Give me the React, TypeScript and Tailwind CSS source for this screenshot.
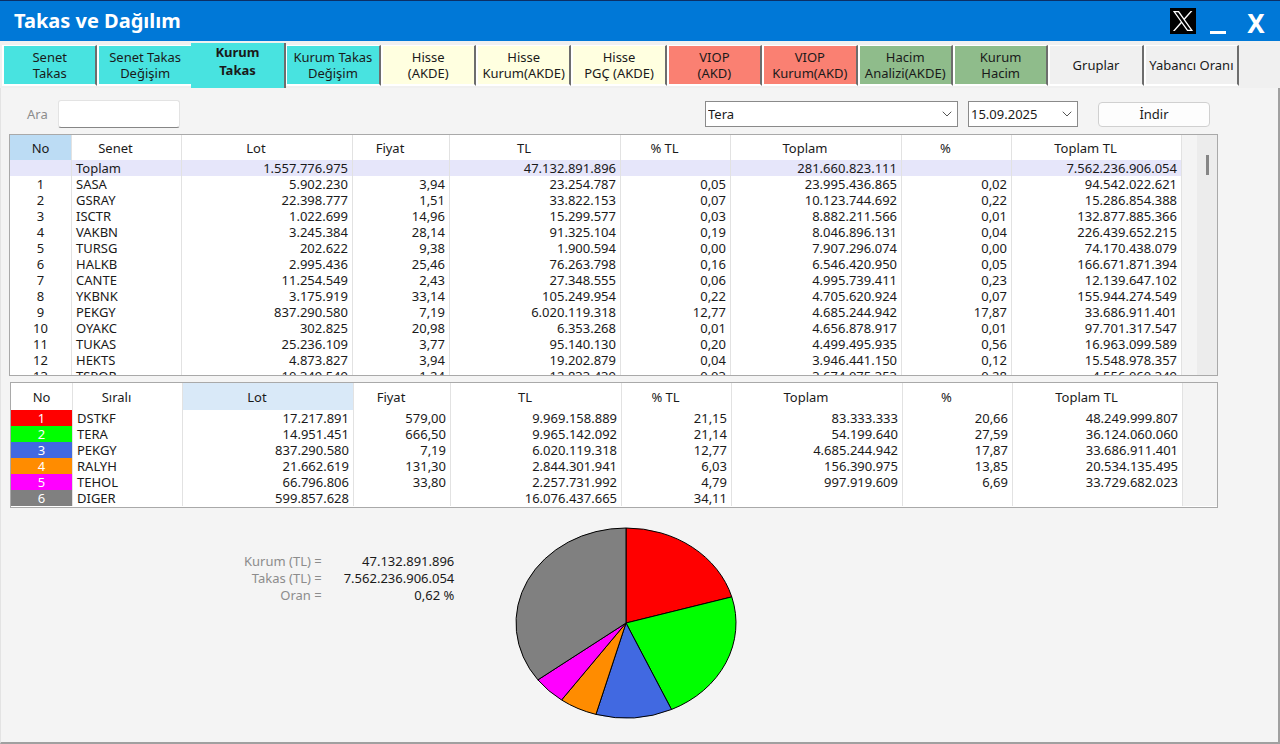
import { ChevronDown } from "lucide-react";
import clsx from "clsx";

const tabs = [
  { lines: ["Senet", "Takas"], color: "bg-[#48e3e0]" },
  { lines: ["Senet Takas", "Değişim"], color: "bg-[#48e3e0]" },
  { lines: ["Kurum", "Takas"], color: "bg-[#48e3e0]", active: true },
  { lines: ["Kurum Takas", "Değişim"], color: "bg-[#48e3e0]" },
  { lines: ["Hisse", "(AKDE)"], color: "bg-[#ffffe0]" },
  { lines: ["Hisse", "Kurum(AKDE)"], color: "bg-[#ffffe0]" },
  { lines: ["Hisse", "PGÇ (AKDE)"], color: "bg-[#ffffe0]" },
  { lines: ["VIOP", "(AKD)"], color: "bg-[#fa8072]" },
  { lines: ["VIOP", "Kurum(AKD)"], color: "bg-[#fa8072]" },
  { lines: ["Hacim", "Analizi(AKDE)"], color: "bg-[#8fbc8b]" },
  { lines: ["Kurum", "Hacim"], color: "bg-[#8fbc8b]" },
  { lines: ["Gruplar"], color: "bg-[#f0f0f0]" },
  { lines: ["Yabancı Oranı"], color: "bg-[#f0f0f0]" },
];

const stocks = [
  ["", "Toplam", "1.557.776.975", "", "47.132.891.896", "", "281.660.823.111", "", "7.562.236.906.054"],
  ["1", "SASA", "5.902.230", "3,94", "23.254.787", "0,05", "23.995.436.865", "0,02", "94.542.022.621"],
  ["2", "GSRAY", "22.398.777", "1,51", "33.822.153", "0,07", "10.123.744.692", "0,22", "15.286.854.388"],
  ["3", "ISCTR", "1.022.699", "14,96", "15.299.577", "0,03", "8.882.211.566", "0,01", "132.877.885.366"],
  ["4", "VAKBN", "3.245.384", "28,14", "91.325.104", "0,19", "8.046.896.131", "0,04", "226.439.652.215"],
  ["5", "TURSG", "202.622", "9,38", "1.900.594", "0,00", "7.907.296.074", "0,00", "74.170.438.079"],
  ["6", "HALKB", "2.995.436", "25,46", "76.263.798", "0,16", "6.546.420.950", "0,05", "166.671.871.394"],
  ["7", "CANTE", "11.254.549", "2,43", "27.348.555", "0,06", "4.995.739.411", "0,23", "12.139.647.102"],
  ["8", "YKBNK", "3.175.919", "33,14", "105.249.954", "0,22", "4.705.620.924", "0,07", "155.944.274.549"],
  ["9", "PEKGY", "837.290.580", "7,19", "6.020.119.318", "12,77", "4.685.244.942", "17,87", "33.686.911.401"],
  ["10", "OYAKC", "302.825", "20,98", "6.353.268", "0,01", "4.656.878.917", "0,01", "97.701.317.547"],
  ["11", "TUKAS", "25.236.109", "3,77", "95.140.130", "0,20", "4.499.495.935", "0,56", "16.963.099.589"],
  ["12", "HEKTS", "4.873.827", "3,94", "19.202.879", "0,04", "3.946.441.150", "0,12", "15.548.978.357"],
  ["13", "TSPOR", "10.349.549", "1,24", "12.833.439", "0,03", "3.674.075.353", "0,28", "4.556.060.349"],
];

const ranked = [
  ["1", "DSTKF", "17.217.891", "579,00", "9.969.158.889", "21,15", "83.333.333", "20,66", "48.249.999.807"],
  ["2", "TERA", "14.951.451", "666,50", "9.965.142.092", "21,14", "54.199.640", "27,59", "36.124.060.060"],
  ["3", "PEKGY", "837.290.580", "7,19", "6.020.119.318", "12,77", "4.685.244.942", "17,87", "33.686.911.401"],
  ["4", "RALYH", "21.662.619", "131,30", "2.844.301.941", "6,03", "156.390.975", "13,85", "20.534.135.495"],
  ["5", "TEHOL", "66.796.806", "33,80", "2.257.731.992", "4,79", "997.919.609", "6,69", "33.729.682.023"],
  ["6", "DIGER", "599.857.628", "", "16.076.437.665", "34,11", "", "", ""],
];

const slices = [
  { value: 21.15, fill: "#ff0000" },
  { value: 21.14, fill: "#00ff00" },
  { value: 12.77, fill: "#4169e1" },
  { value: 6.03, fill: "#ff8c00" },
  { value: 4.79, fill: "#ff00ff" },
  { value: 34.12, fill: "#808080" },
];

const rankColors = [
  "bg-[#ff0000]",
  "bg-[#00ff00]",
  "bg-[#4169e1]",
  "bg-[#ff8c00]",
  "bg-[#ff00ff]",
  "bg-[#808080]",
];

const columnWidths = [
  "w-[62px]",
  "w-[110px]",
  "w-[171px]",
  "w-[97px]",
  "w-[171px]",
  "w-[110px]",
  "w-[171px]",
  "w-[110px]",
  "w-[170px]",
];

type GridProps = {
  nameTitle: string;
  rows: string[][];
  selected: number;
  selectedColor: string;
  colors?: string[];
};

function Grid({ nameTitle, rows, selected, selectedColor, colors }: GridProps) {
  const titles = ["No", nameTitle, "Lot", "Fiyat", "TL", "% TL", "Toplam", "%", "Toplam TL"];

  return (
    <table className="w-full table-fixed border-separate border-spacing-0 self-start">
      <colgroup>
        {columnWidths.map((width, i) => (
          <col key={i} className={width} />
        ))}
        <col />
      </colgroup>
      <thead>
        <tr className={colors ? "h-[27px]" : "h-[25px]"}>
          {titles.map((title, i) => (
            <th
              key={title}
              className={clsx(
                "border-r border-[#e2e2e2] p-0 text-center font-normal",
                i > 0 && "pr-[22px]",
                i === selected ? selectedColor : "bg-white"
              )}
            >
              {title}
            </th>
          ))}
          <td className="bg-[#f4f4f4] p-0"></td>
        </tr>
      </thead>
      <tbody>
        {rows.map((row, r) => (
          <tr key={row[1]} className="h-4">
            {row.map((cell, i) => (
              <td
                key={i}
                className={clsx(
                  "border-r border-[#e2e2e2] p-0 whitespace-nowrap",
                  i === 0 && "text-center",
                  i === 1 && "pl-1",
                  i > 1 && "pr-1 text-right",
                  i === 0 && colors
                    ? [colors[r], "text-white"]
                    : row[0] === ""
                      ? "bg-[#e6e6fa]"
                      : "bg-white"
                )}
              >
                {cell}
              </td>
            ))}
            <td className="bg-[#f4f4f4] p-0"></td>
          </tr>
        ))}
      </tbody>
    </table>
  );
}

function Pie() {
  const cx = 110;
  const cy = 95;

  // point where a ray from the centre meets the ellipse
  const edge = (percent: number) => {
    const a = (percent / 100) * 2 * Math.PI;
    const dx = Math.sin(a);
    const dy = -Math.cos(a);
    const t = 1 / Math.hypot(dx / cx, dy / cy);
    return `${cx + dx * t} ${cy + dy * t}`;
  };

  let sum = 0;
  return (
    <svg viewBox="-1 -1 222 192" className="h-48 w-[222px]">
      {slices.map((s) => {
        const start = edge(sum);
        sum += s.value;
        return (
          <path
            key={s.fill}
            d={`M${cx} ${cy} L${start} A${cx} ${cy} 0 0 1 ${edge(sum)} Z`}
            fill={s.fill}
            stroke="#000"
            strokeLinejoin="round"
          />
        );
      })}
    </svg>
  );
}

function TitleBar() {
  return (
    <header className="flex h-[41px] items-center border-t border-[#0b2f66] bg-[#0078d7] pr-2 pl-[14px] text-white">
      <h1 className="text-[20px] font-bold">Takas ve Dağılım</h1>
      <div className="ml-auto flex items-center">
        <button aria-label="X" className="h-[26px] w-[26px] bg-black p-[2px]">
          <svg viewBox="0 0 24 24" fill="#fff">
            <path d="M14.1 10.3 22.3 1h-2l-7.1 8.1L7.6 1H1l8.6 12.2L1 23h2l7.5-8.6 6 8.6H23l-8.9-12.7zm-2.7 3.1-.8-1.2L3.7 2.4h3l5.5 7.8.9 1.2 7.2 10.2h-3l-5.9-8.2z" />
          </svg>
        </button>
        <button aria-label="Küçült" className="flex h-8 w-11 items-end justify-center pb-[3px]">
          <span className="h-[3px] w-4 bg-white"></span>
        </button>
        <button className="flex h-8 w-8 items-center justify-center pt-1 text-[26px] leading-8 font-bold">
          X
        </button>
      </div>
    </header>
  );
}

function Tabs() {
  return (
    <nav className="flex h-[47px] bg-[#f0f0f0] pt-[2px] pr-[41px] pl-[2px]">
      {tabs.map((tab) => (
        <button
          key={tab.lines.join(" ")}
          className={clsx(
            "flex flex-1 flex-col items-center border-r-2 border-[#6d6d6d] whitespace-nowrap",
            tab.active
              ? "z-10 -mr-px -ml-[2px] basis-1 leading-[18px] font-bold"
              : "mt-[2px] mb-[2px] justify-center border-t border-b-2 border-l-2 border-t-white border-b-white border-l-white leading-4",
            tab.color
          )}
        >
          {tab.lines.map((line) => (
            <span key={line}>{line}</span>
          ))}
        </button>
      ))}
    </nav>
  );
}

function Toolbar() {
  return (
    <div className="flex items-center pt-3 pr-[68px] pb-[6px] pl-[26px]">
      <label htmlFor="search" className="mr-[10px] text-[#8c8c8c]">
        Ara
      </label>
      <input
        id="search"
        className="h-7 w-[122px] rounded-[3px] border border-[#e3e3e3] border-b-[#868686] bg-white px-1"
      />

      <div className="relative ml-auto">
        <select
          aria-label="Kurum"
          className="h-[26px] w-[253px] appearance-none border border-[#8a8a8a] bg-white pr-6 pl-[2px]"
        >
          <option>Tera</option>
        </select>
        <ChevronDown
          size={16}
          strokeWidth={1.5}
          className="pointer-events-none absolute top-[5px] right-[3px] text-[#555]"
        />
      </div>
      <div className="relative ml-[10px]">
        <select
          aria-label="Tarih"
          className="h-[26px] w-[110px] appearance-none border border-[#8a8a8a] bg-white pr-6 pl-[2px]"
        >
          <option>15.09.2025</option>
        </select>
        <ChevronDown
          size={16}
          strokeWidth={1.5}
          className="pointer-events-none absolute top-[5px] right-[3px] text-[#555]"
        />
      </div>
      <button className="ml-5 h-[25px] w-28 rounded border border-[#d0d0d0] bg-[#fdfdfd]">
        İndir
      </button>
    </div>
  );
}

function Summary() {
  return (
    <dl className="grid grid-cols-[auto_auto] content-start gap-x-[22px] pt-[26px] text-right leading-[17px]">
      <dt className="text-[#8c8c8c]">Kurum (TL) =</dt>
      <dd>47.132.891.896</dd>
      <dt className="text-[#8c8c8c]">Takas (TL) =</dt>
      <dd>7.562.236.906.054</dd>
      <dt className="text-[#8c8c8c]">Oran =</dt>
      <dd>0,62 %</dd>
    </dl>
  );
}

function App() {
  return (
    <div className="flex min-h-screen flex-col bg-[#f4f4f4] font-['Noto_Sans',sans-serif] text-[13px] leading-4 text-[#1a1a1a]">
      <TitleBar />
      <Tabs />
      <main className="flex flex-1 flex-col border-r-2 border-b-2 border-l border-[#a0a0a0] border-l-[#e3e3e3]">
        <Toolbar />
        <div className="mr-[60px] ml-2 flex h-[242px] overflow-hidden border border-[#a9a9a9] bg-white">
          <Grid
            nameTitle="Senet"
            rows={stocks}
            selected={0}
            selectedColor="bg-[#bcdcf4]"
          />
          <div className="flex w-5 shrink-0 justify-center bg-[#ececec] pt-5">
            <div className="h-5 w-[3px] bg-[#868686]"></div>
          </div>
        </div>
        <div className="mt-[6px] mr-[60px] ml-[9px] border border-[#a9a9a9] bg-white pb-px">
          <Grid
            nameTitle="Sıralı"
            rows={ranked}
            selected={2}
            selectedColor="bg-[#d9e9f8]"
            colors={rankColors}
          />
        </div>
        <div className="flex gap-[61px] pt-[19px] pb-4 pl-[243px]">
          <Summary />
          <Pie />
        </div>
      </main>
    </div>
  );
}

export default App;
